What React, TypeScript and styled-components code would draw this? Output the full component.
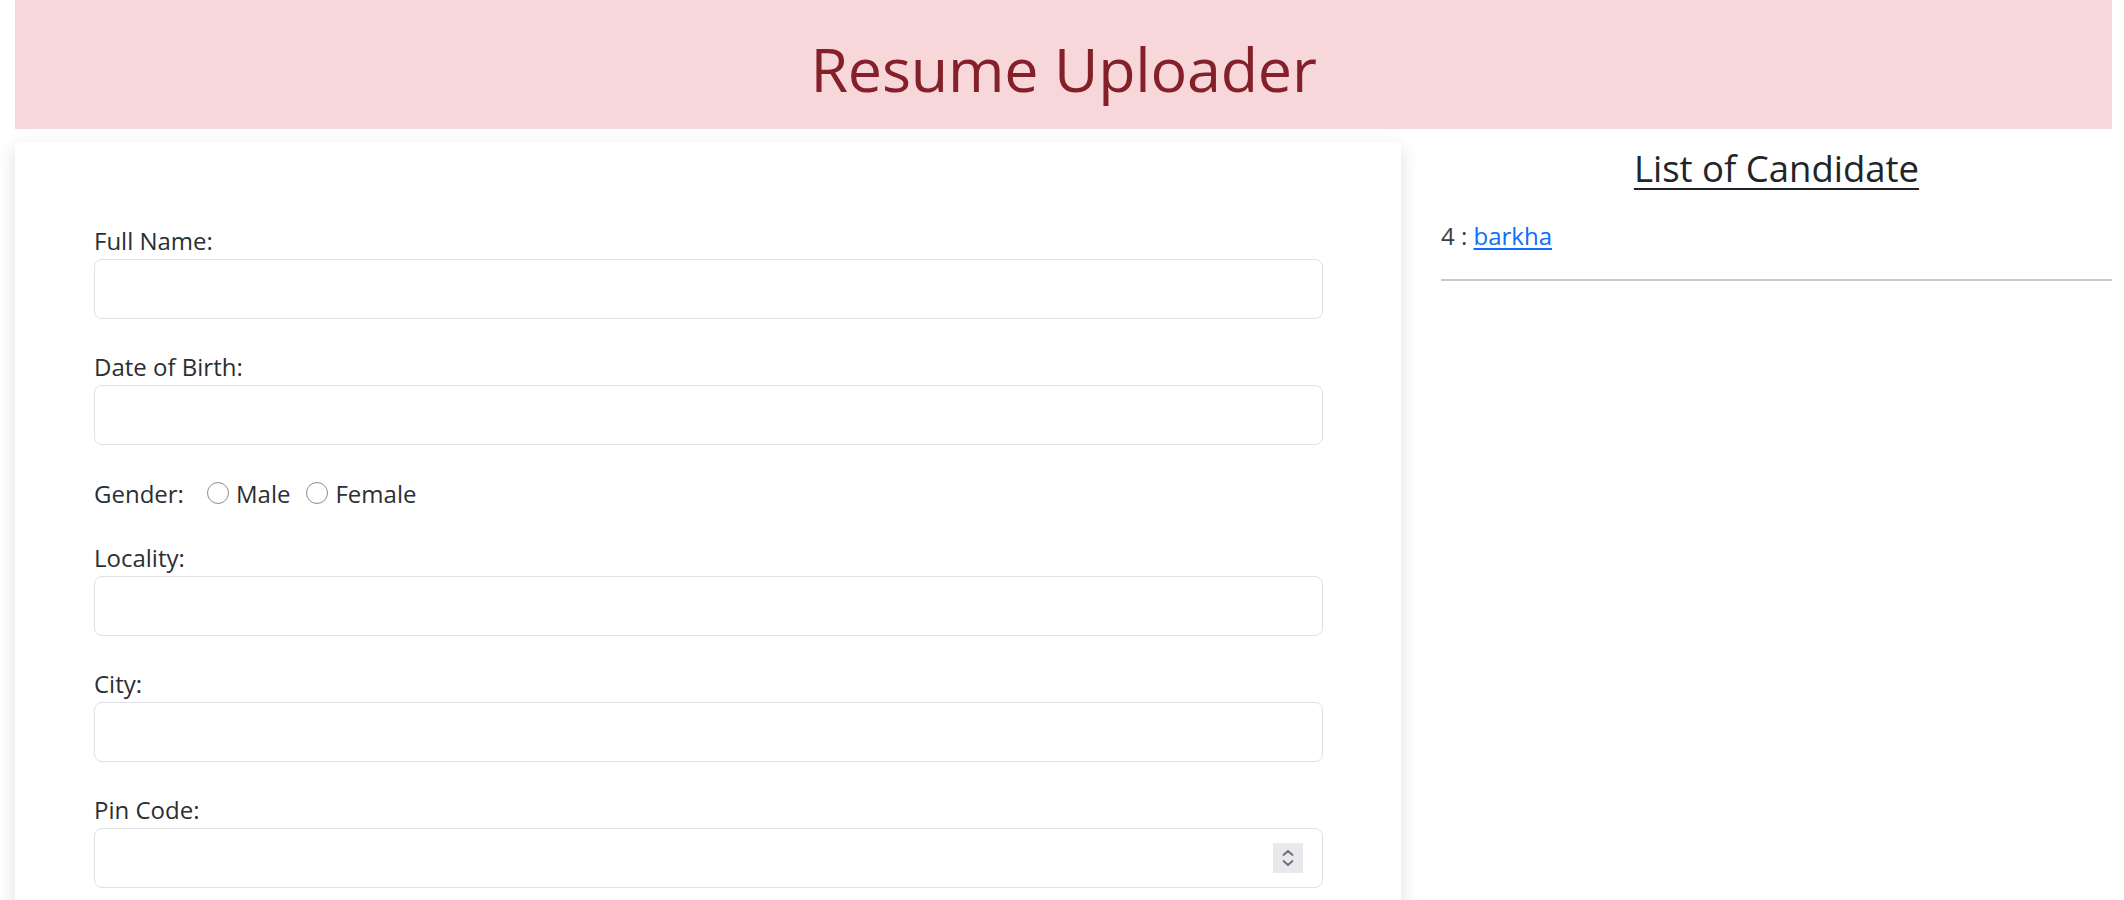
import React from "react";
import styled, { createGlobalStyle } from "styled-components";

const Global = createGlobalStyle`
  html, body { margin: 0; padding: 0; background: #ffffff; }
  body { font-family: "Open Sans", "Noto Sans", Arial, sans-serif; color: #212529; }
  * { box-sizing: border-box; }
`;

const Page = styled.div`
  padding: 0 12px 0 15px;
  height: 900px;
  overflow: hidden;
`;

const Header = styled.header`
  background: #f8d7da;
  height: 129px;
  display: flex;
  align-items: center;
  justify-content: center;
`;

const Title = styled.h1`
  margin: 0;
  padding-top: 8px;
  font-size: 61px;
  font-weight: 400;
  line-height: 1.2;
  color: #842029;
  letter-spacing: -0.2px;
`;

const Main = styled.div`
  display: grid;
  grid-template-columns: 1386px 1fr;
  column-gap: 40px;
  margin-top: 13px;
`;

const Card = styled.div`
  background: #ffffff;
  border-radius: 4px;
  box-shadow: 0 6px 20px rgba(0, 0, 0, 0.13);
  padding: 81px 78px 40px 79px;
  min-height: 900px;
`;

const Group = styled.div`
  margin-bottom: 30px;
`;

const Label = styled.label`
  display: block;
  font-size: 24px;
  line-height: 36px;
  color: #2b2f33;
`;

const FieldWrap = styled.div`
  position: relative;
`;

const Input = styled.input`
  display: block;
  width: 100%;
  height: 60px;
  border: 1.5px solid #dde1e6;
  border-radius: 8px;
  background: #fff;
  font-size: 24px;
  padding: 0 18px;
  outline: none;
  -moz-appearance: textfield;
  &::-webkit-outer-spin-button,
  &::-webkit-inner-spin-button {
    -webkit-appearance: none;
    margin: 0;
  }
`;

const Spinner = styled.span`
  position: absolute;
  right: 20px;
  top: 15px;
  width: 30px;
  height: 30px;
  background: #e9e9ed;
  display: flex;
  align-items: center;
  justify-content: center;
`;

const RadioRow = styled.div`
  display: flex;
  align-items: center;
  height: 36px;
  margin-bottom: 29px;
  font-size: 24px;
  color: #2b2f33;
`;

const RadioLabel = styled.span`
  width: 113px;
`;

const Option = styled.label`
  display: inline-flex;
  align-items: center;
  margin-right: 16px;
`;

const Radio = styled.input`
  appearance: none;
  -webkit-appearance: none;
  width: 22px;
  height: 22px;
  border: 1.5px solid #8f8f8f;
  border-radius: 50%;
  background: #fff;
  margin: 0 7px 0 0;
`;

const Side = styled.aside`
  display: flex;
  flex-direction: column;
`;

const ListTitle = styled.h4`
  margin: 5px 0 0;
  text-align: center;
  font-size: 36.5px;
  font-weight: 400;
  line-height: 1.2;
  color: #212529;
  text-decoration: underline;
  text-decoration-thickness: 2px;
  text-underline-offset: 6px;
`;

const Entry = styled.p`
  margin: 27px 0 0;
  font-size: 24px;
  line-height: 36px;
  color: #3a3f44;
`;

const NameLink = styled.a`
  color: #0d6efd;
  text-decoration: underline;
  text-underline-offset: 3px;
`;

const Rule = styled.hr`
  margin: 25px 0 0;
  border: 0;
  border-top: 2px solid #c9c9c9;
`;

const fields = ["Full Name:", "Date of Birth:"];
const fields2 = ["Locality:", "City:"];

function Field({ label, number }: { label: string; number?: boolean }) {
  return (
    <Group>
      <Label>{label}</Label>
      <FieldWrap>
        <Input type={number ? "number" : "text"} />
        {number && (
          <Spinner>
            <svg width="14" height="20" viewBox="0 0 14 20" fill="none" stroke="#6e6e78" strokeWidth="1.8" strokeLinecap="round" strokeLinejoin="round">
              <path d="M2.5 7 L7 3 L11.5 7" />
              <path d="M2.5 13 L7 17 L11.5 13" />
            </svg>
          </Spinner>
        )}
      </FieldWrap>
    </Group>
  );
}

export default function App() {
  return (
    <>
      <Global />
      <Page>
        <Header>
          <Title>Resume Uploader</Title>
        </Header>
        <Main>
          <Card>
            {fields.map((f) => (
              <Field key={f} label={f} />
            ))}
            <RadioRow>
              <RadioLabel>Gender:</RadioLabel>
              <Option>
                <Radio type="radio" name="gender" />
                Male
              </Option>
              <Option>
                <Radio type="radio" name="gender" />
                Female
              </Option>
            </RadioRow>
            {fields2.map((f) => (
              <Field key={f} label={f} />
            ))}
            <Field label="Pin Code:" number />
          </Card>
          <Side>
            <ListTitle>List of Candidate</ListTitle>
            <Entry>
              4 : <NameLink href="#">barkha</NameLink>
            </Entry>
            <Rule />
          </Side>
        </Main>
      </Page>
    </>
  );
}
